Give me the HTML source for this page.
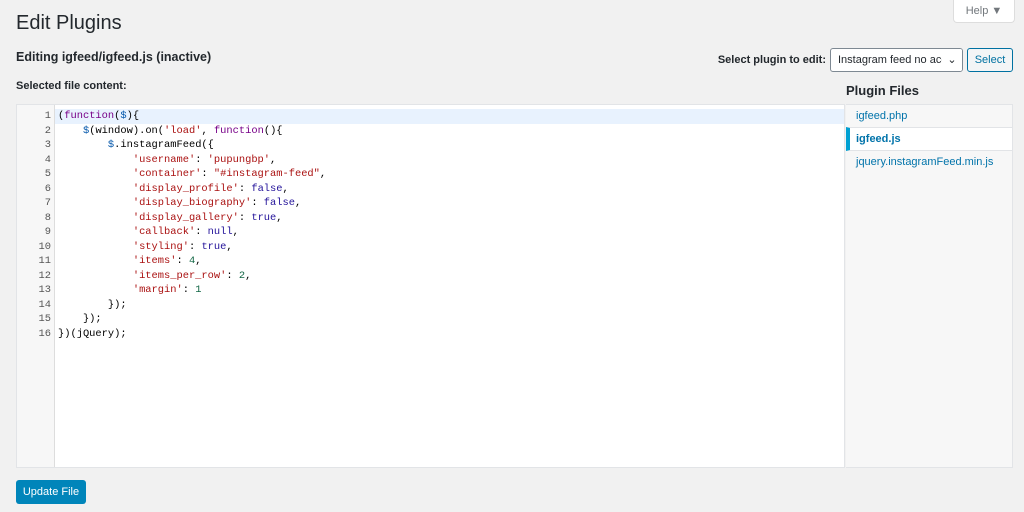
<!DOCTYPE html>
<html><head><style>
body{margin:0;width:1024px;height:512px;background:#f1f1f1;font-family:"Liberation Sans",sans-serif;color:#23282d;position:relative;overflow:hidden}
.a{position:absolute}
h1{position:absolute;left:16px;top:12px;margin:0;font-size:20px;font-weight:400;color:#23282d}
.help{left:953px;top:0;width:60px;height:22px;background:#fff;border:1px solid #ddd;border-top:none;border-radius:0 0 4px 4px;font-size:11px;color:#72777c;text-align:center;line-height:22px}
.ed{left:16px;top:104px;width:829px;height:364px;background:#fff;border:1px solid #e2e4e7;box-sizing:border-box}
.gut{position:absolute;left:0;top:0;width:37px;height:100%;background:#f7f7f7;border-right:1px solid #ddd}
pre{position:absolute;left:0;top:4px;margin:0;font-family:"Liberation Mono",monospace;font-size:10.4px;line-height:14.53px;color:#000}
.ln{position:absolute;left:0;width:34px;text-align:right;top:4px;font-family:"Liberation Mono",monospace;font-size:10.4px;line-height:14.53px;color:#555}
.k{color:#708}.s{color:#a11}.v{color:#05a}.n{color:#164}.d{color:#219}
.side{left:846px;top:104px;width:167px;height:364px;background:#f7f7f7;border:1px solid #e2e4e7;border-left:none;box-sizing:border-box;font-size:11px}
.side div{height:22px;line-height:22px;padding-left:10px;color:#0073aa}
</style></head><body>
<h1>Edit Plugins</h1>
<div class="a help">Help ▼</div>
<div class="a" style="left:16px;top:50px;font-size:12.5px;font-weight:600">Editing igfeed/igfeed.js (inactive)</div>
<div class="a" style="left:16px;top:80px;font-size:11px;font-weight:600">Selected file content:</div>
<div class="a" style="right:198px;top:54px;font-size:11px;font-weight:600;white-space:nowrap">Select plugin to edit:</div>
<div class="a" style="left:830px;top:48px;width:133px;height:24px;box-sizing:border-box;background:#fff;border:1px solid #7e8993;border-radius:3px;font-size:11px;line-height:22px;padding-left:7px;overflow:hidden;white-space:nowrap">Instagram feed no acc<span style="position:absolute;right:0;top:0;width:20px;background:#fff;text-align:center">⌄</span></div>
<div class="a" style="left:967px;top:48px;width:46px;height:24px;box-sizing:border-box;background:#f3f5f6;border:1px solid #0071a1;border-radius:3px;color:#0071a1;font-size:11px;line-height:22px;text-align:center">Select</div>
<div class="a" style="left:846px;top:83px;font-size:13px;font-weight:600">Plugin Files</div>
<div class="a ed"><div class="gut"></div>
<div style="position:absolute;left:38px;top:4px;right:0;height:15px;background:#e8f2fe"></div>
<div class="ln">1<br>2<br>3<br>4<br>5<br>6<br>7<br>8<br>9<br>10<br>11<br>12<br>13<br>14<br>15<br>16</div>
<pre style="left:41px">(<span class="k">function</span>(<span class="v">$</span>){
    <span class="v">$</span>(window).on(<span class="s">'load'</span>, <span class="k">function</span>(){
        <span class="v">$</span>.instagramFeed({
            <span class="s">'username'</span>: <span class="s">'pupungbp'</span>,
            <span class="s">'container'</span>: <span class="s">"#instagram-feed"</span>,
            <span class="s">'display_profile'</span>: <span class="d">false</span>,
            <span class="s">'display_biography'</span>: <span class="d">false</span>,
            <span class="s">'display_gallery'</span>: <span class="d">true</span>,
            <span class="s">'callback'</span>: <span class="d">null</span>,
            <span class="s">'styling'</span>: <span class="d">true</span>,
            <span class="s">'items'</span>: <span class="n">4</span>,
            <span class="s">'items_per_row'</span>: <span class="n">2</span>,
            <span class="s">'margin'</span>: <span class="n">1</span>
        });
    });
})(jQuery);</pre>
</div>
<div class="a side">
<div>igfeed.php</div>
<div style="background:#fff;border-left:4px solid #00a0d2;padding-left:6px;font-weight:600;border-top:1px solid #e2e4e7;border-bottom:1px solid #e2e4e7;color:#0073aa;height:22px">igfeed.js</div>
<div>jquery.instagramFeed.min.js</div>
</div>
<div class="a" style="left:16px;top:480px;width:70px;height:24px;background:#0085ba;border-radius:3px;color:#fff;font-size:11px;line-height:24px;text-align:center">Update File</div>
</body></html>
